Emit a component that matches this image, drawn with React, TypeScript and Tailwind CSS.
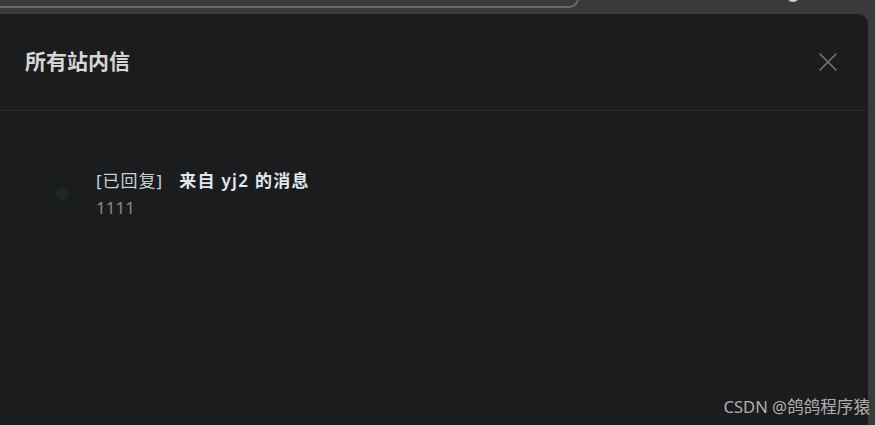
import { X } from 'lucide-react';

export default function App() {
  return (
    <div
      className="relative h-[425px] w-[875px] overflow-hidden bg-[#3a3a3a]"
      style={{ fontFamily: '"Noto Sans", "Noto Sans CJK SC", sans-serif' }}
    >
      {/* Top search bar edge */}
      <div className="absolute left-[-20px] top-[-30px] h-[38px] w-[599px] rounded-[10px] border-2 border-[#6a6a6a]" />
      <div className="absolute left-[786px] top-[-12px] h-[14px] w-[14px] rounded-full bg-[#d0d0d0]" />

      <div className="pt-[14px] pr-[7px]">
        <div className="flex h-[411px] flex-col rounded-tr-[10px] bg-[#1b1c1e]">
          {/* Header */}
          <div className="flex h-[97px] items-center justify-between border-b border-[#2a2b2d] pl-[25px] pr-[24px]">
            <h2 className="text-[21px] font-semibold text-[#d6d6d6]">所有站内信</h2>
            <X className="h-[32px] w-[32px] text-[#777777]" strokeWidth={1.15} />
          </div>

          {/* Messages */}
          <div className="pt-[56px]">
            <div className="flex items-center">
              <span className="ml-[56px] h-[12px] w-[12px] rounded-full bg-[#1f2b22]" />
              <div className="ml-[28px] text-[17px] leading-[27px]">
                <div className="flex tracking-[1px]">
                  <span className="text-[#c9d1d6]">[已回复]</span>
                  <span className="ml-[16px] font-semibold tracking-[1.3px] text-[#e2e8ec]">来自 yj2 的消息</span>
                </div>
                <div className="text-[#8a8a8a]">1111</div>
              </div>
            </div>
          </div>
        </div>
      </div>

      <div className="absolute bottom-[5px] right-[5px] text-[16.6px] text-[#b0b0b0]">CSDN @鸽鸽程序猿</div>
    </div>
  );
}
